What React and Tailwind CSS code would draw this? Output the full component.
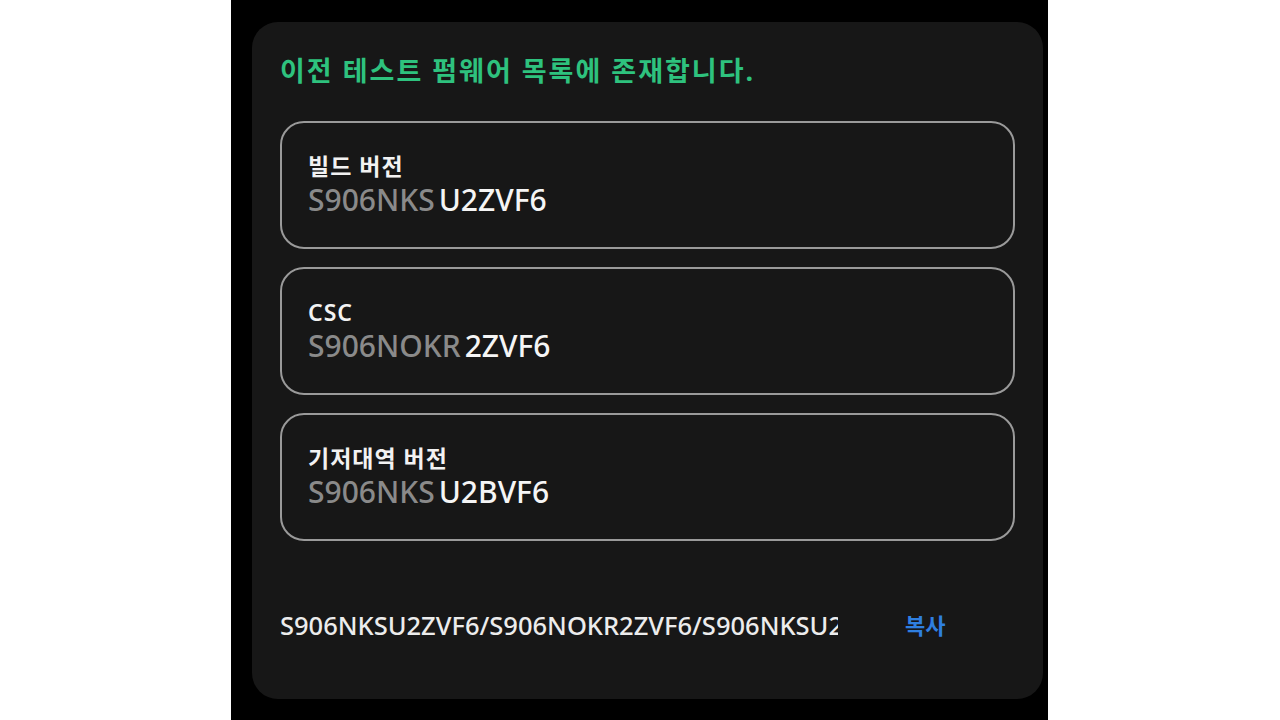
import React from "react";

const font = { fontFamily: '"Noto Sans", "Noto Sans CJK KR", sans-serif' };

const InfoBox = ({ label, prefix, suffix }) => {
  return (
    <div className="h-[128px] rounded-[24px] border-2 border-[#9a9a9a] px-[26px] flex flex-col justify-center">
      <div className="text-[23px] leading-[30px] font-semibold text-[#f2f2f2] tracking-[1px]">{label}</div>
      <div className="text-[30px] leading-[38px] font-medium">
        <span className="text-[#8a8a8a]">{prefix}</span>
        <span className="text-[#f5f5f5] ml-[4px]">{suffix}</span>
      </div>
    </div>
  );
};

const App = () => {
  return (
    <div className="w-[1280px] h-[720px] bg-white flex overflow-hidden" style={font}>
      <div className="ml-[231px] w-[817px] h-full bg-black pl-[21px] pr-[5px] pt-[22px]">
        {/* Dialog card */}
        <div className="h-[677px] rounded-[26px] bg-[#171717] px-[28px] pt-[31px]">
          <h1 className="text-[27px] leading-[36px] font-bold text-[#2ec27e] tracking-[2px]">
            이전 테스트 펌웨어 목록에 존재합니다.
          </h1>

          <div className="mt-[32px] flex flex-col gap-[18px]">
            <InfoBox label="빌드 버전" prefix="S906NKS" suffix="U2ZVF6" />
            <InfoBox label="CSC" prefix="S906NOKR" suffix="2ZVF6" />
            <InfoBox label="기저대역 버전" prefix="S906NKS" suffix="U2BVF6" />
          </div>

          {/* Combined value + copy */}
          <div className="mt-[66px] flex items-center">
            <div className="w-[558px] shrink-0 overflow-hidden whitespace-nowrap text-[25.5px] leading-[36px] font-medium text-[#ececec]">
              S906NKSU2ZVF6/S906NOKR2ZVF6/S906NKSU2ZVF6
            </div>
            <button className="ml-[67px] text-[22px] leading-[36px] font-bold text-[#2f7fe0]">복사</button>
          </div>
        </div>
      </div>
    </div>
  );
};

export default App;
